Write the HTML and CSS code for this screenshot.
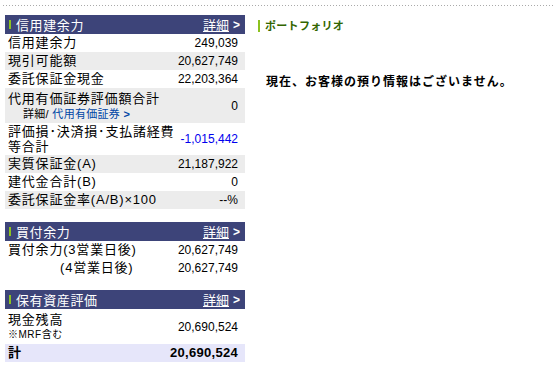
FILE: index.html
```html
<!DOCTYPE html>
<html lang="ja">
<head>
  <meta charset="UTF-8" />
  <title>口座サマリー</title>
  <link rel="stylesheet" href="styles.css">
</head>
<body>
  <div class="page">
    <div class="dots"></div>
    <div class="columns">
      <div class="left">

        <div class="box-head">
          <span class="bar"></span>
          <span class="box-title">信用建余力</span>
          <a class="more" href="#">詳細</a><span class="chev">&gt;</span>
        </div>
        <table class="data">
          <tr><td class="lbl">信用建余力</td><td class="num">249,039</td></tr>
          <tr class="alt"><td class="lbl">現引可能額</td><td class="num">20,627,749</td></tr>
          <tr><td class="lbl">委託保証金現金</td><td class="num">22,203,364</td></tr>
          <tr class="alt tall">
            <td class="lbl">代用有価証券評価額合計
              <div class="sub"><span class="sub-txt">詳細/</span> <a href="#">代用有価証券</a> <span class="sub-chev">&gt;</span></div>
            </td>
            <td class="num">0</td>
          </tr>
          <tr class="tall2"><td class="lbl wrap">評価損･決済損･支払諸経費<br>等合計</td><td class="num minus">-1,015,442</td></tr>
          <tr class="alt"><td class="lbl">実質保証金(A)</td><td class="num">21,187,922</td></tr>
          <tr><td class="lbl">建代金合計(B)</td><td class="num">0</td></tr>
          <tr class="alt"><td class="lbl">委託保証金率(A/B)×100</td><td class="num">--%</td></tr>
        </table>

        <div class="box-head">
          <span class="bar"></span>
          <span class="box-title">買付余力</span>
          <a class="more" href="#">詳細</a><span class="chev">&gt;</span>
        </div>
        <table class="data">
          <tr><td class="lbl">買付余力(3営業日後)</td><td class="num">20,627,749</td></tr>
          <tr><td class="lbl indent">(4営業日後)</td><td class="num">20,627,749</td></tr>
        </table>

        <div class="box-head">
          <span class="bar"></span>
          <span class="box-title">保有資産評価</span>
          <a class="more" href="#">詳細</a><span class="chev">&gt;</span>
        </div>
        <table class="data">
          <tr class="tall">
            <td class="lbl">現金残高<div class="note">※MRF含む</div></td>
            <td class="num">20,690,524</td>
          </tr>
          <tr class="total"><td class="lbl">計</td><td class="num">20,690,524</td></tr>
        </table>
      </div>

      <div class="right">
        <h2 class="pf-title">ポートフォリオ</h2>
        <p class="empty">現在、お客様の預り情報はございません。</p>
      </div>
    </div>
  </div>
</body>
</html>
```

FILE: styles.css
```css
body {
  margin: 0;
  background: #fff;
  font-family: "Liberation Sans", "Noto Sans CJK JP", sans-serif;
  font-size: 12px;
  color: #000;
}
.page {
  width: 553px;
  padding-top: 5px;
}
.dots {
  height: 1px;
  margin-left: 3px;
  background: repeating-linear-gradient(90deg, #aaa 0 1px, transparent 1px 3px);
}
.columns {
  display: flex;
  padding-top: 9px;
}
.left {
  width: 240px;
  margin-left: 5px;
}
.right {
  margin-left: 13px;
  flex: 1;
}

/* section header bar */
.box-head {
  display: flex;
  align-items: center;
  height: 19px;
  background: #3d4479;
  color: #fff;
  padding: 0 5px 0 4px;
}
.bar {
  width: 2px;
  height: 9px;
  background: #8cc21f;
  margin-right: 5px;
}
.box-title {
  flex: 1;
  font-size: 13px;
  letter-spacing: 0.6px;
}
.more {
  color: #fff;
  font-size: 13px;
  text-decoration: underline;
}
.chev {
  margin-left: 4px;
  font-weight: bold;
  font-size: 12px;
}

/* rows */
.data {
  width: 100%;
  border-collapse: collapse;
  margin-bottom: 13px;
}
.data td {
  height: 18px;
  padding: 0;
  line-height: 16px;
}
.data tr.alt td {
  background: #ececec;
}
.lbl {
  padding-left: 3px !important;
  font-size: 13px;
  letter-spacing: 0.8px;
  white-space: nowrap;
}
.lbl.wrap {
  line-height: 15px !important;
}
.lbl.indent {
  padding-left: 55px !important;
}
.num {
  text-align: right;
  padding-right: 7px !important;
  font-size: 12px;
  white-space: nowrap;
}
.num.minus {
  color: #0000ee;
}
.data tr.tall td {
  height: 35px;
}
.data tr.tall2 td {
  height: 32px;
}
.sub {
  font-size: 11px;
  letter-spacing: 0.3px;
  padding-left: 15px;
  line-height: 14px;
}
.sub-txt {
  color: #000;
}
.sub a {
  color: #0047a6;
  text-decoration: none;
}
.sub-chev {
  color: #0047a6;
  font-weight: bold;
}
.note {
  font-size: 10px;
  letter-spacing: 0.5px;
  line-height: 13px;
}
.data tr.total td {
  background: #e6e6fa;
  font-weight: bold;
  height: 18px;
}
.data tr.total .num {
  font-size: 13px;
  letter-spacing: 0.3px;
}

/* portfolio */
.pf-title {
  margin: 5px 0 0;
  border-left: 2px solid #8cc21f;
  padding-left: 5px;
  font-size: 11px;
  line-height: 12px;
  color: #336600;
  font-weight: bold;
  letter-spacing: 0.3px;
}
.empty {
  margin: 40px 0 0 8px;
  font-size: 12px;
  font-weight: bold;
  letter-spacing: 1px;
}
```
